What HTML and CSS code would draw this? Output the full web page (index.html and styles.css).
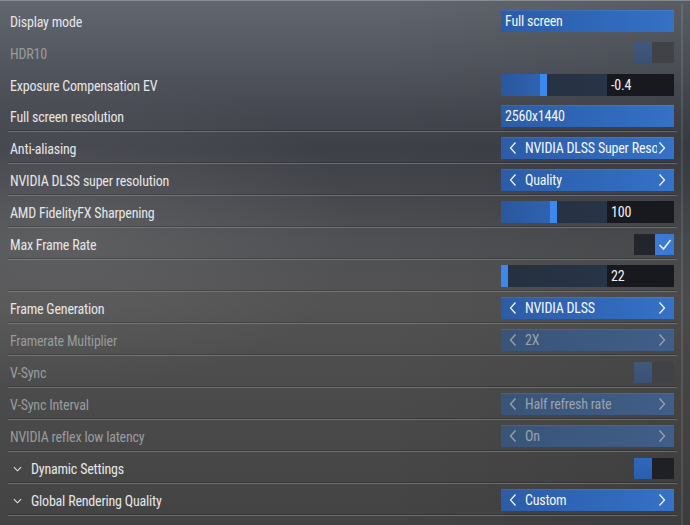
FILE: index.html
```html
<!DOCTYPE html>
<html>
<head>
<meta charset="utf-8">
<link rel="stylesheet" href="styles.css">
</head>
<body>
<div class="page">
  <div class="list">
    <div class="row">
      <span class="label">Display mode</span>
      <div class="ctl drop">Full screen</div>
    </div>
    <div class="row">
      <span class="label dim">HDR10</span>
      <div class="toggle off"><span class="a"></span><span class="b"></span></div>
    </div>
    <div class="row">
      <span class="label">Exposure Compensation EV</span>
      <div class="ctl slider"><div class="track"><span class="fill" style="width:39px"></span><span class="knob"></span></div><span class="val">-0.4</span></div>
    </div>
    <div class="row sep">
      <span class="label">Full screen resolution</span>
      <div class="ctl drop">2560x1440</div>
    </div>
    <div class="row sep">
      <span class="label">Anti-aliasing</span>
      <div class="ctl sel"><svg class="chev" viewBox="0 0 8 14"><polyline points="6.5,1.5 1.5,7 6.5,12.5"/></svg><span class="txt">NVIDIA DLSS Super Resolution</span><svg class="chev" viewBox="0 0 8 14"><polyline points="1.5,1.5 6.5,7 1.5,12.5"/></svg></div>
    </div>
    <div class="row sep">
      <span class="label">NVIDIA DLSS super resolution</span>
      <div class="ctl sel"><svg class="chev" viewBox="0 0 8 14"><polyline points="6.5,1.5 1.5,7 6.5,12.5"/></svg><span class="txt">Quality</span><svg class="chev" viewBox="0 0 8 14"><polyline points="1.5,1.5 6.5,7 1.5,12.5"/></svg></div>
    </div>
    <div class="row sep">
      <span class="label">AMD FidelityFX Sharpening</span>
      <div class="ctl slider"><div class="track"><span class="fill" style="width:49px"></span><span class="knob"></span></div><span class="val">100</span></div>
    </div>
    <div class="row sep">
      <span class="label">Max Frame Rate</span>
      <div class="toggle check"><span class="a"></span><span class="b"><svg viewBox="0 0 18 21"><polyline points="4,11 8,15 15,6"/></svg></span></div>
    </div>
    <div class="row sep">
      <span class="label"></span>
      <div class="ctl slider"><div class="track"><span class="fill" style="width:0px"></span><span class="knob"></span></div><span class="val">22</span></div>
    </div>
    <div class="row sep">
      <span class="label">Frame Generation</span>
      <div class="ctl sel"><svg class="chev" viewBox="0 0 8 14"><polyline points="6.5,1.5 1.5,7 6.5,12.5"/></svg><span class="txt">NVIDIA DLSS</span><svg class="chev" viewBox="0 0 8 14"><polyline points="1.5,1.5 6.5,7 1.5,12.5"/></svg></div>
    </div>
    <div class="row sep">
      <span class="label dim">Framerate Multiplier</span>
      <div class="ctl sel disabled"><svg class="chev" viewBox="0 0 8 14"><polyline points="6.5,1.5 1.5,7 6.5,12.5"/></svg><span class="txt">2X</span><svg class="chev" viewBox="0 0 8 14"><polyline points="1.5,1.5 6.5,7 1.5,12.5"/></svg></div>
    </div>
    <div class="row sep">
      <span class="label dim">V-Sync</span>
      <div class="toggle off"><span class="a"></span><span class="b"></span></div>
    </div>
    <div class="row sep">
      <span class="label dim">V-Sync Interval</span>
      <div class="ctl sel disabled"><svg class="chev" viewBox="0 0 8 14"><polyline points="6.5,1.5 1.5,7 6.5,12.5"/></svg><span class="txt">Half refresh rate</span><svg class="chev" viewBox="0 0 8 14"><polyline points="1.5,1.5 6.5,7 1.5,12.5"/></svg></div>
    </div>
    <div class="row sep">
      <span class="label dim">NVIDIA reflex low latency</span>
      <div class="ctl sel disabled"><svg class="chev" viewBox="0 0 8 14"><polyline points="6.5,1.5 1.5,7 6.5,12.5"/></svg><span class="txt">On</span><svg class="chev" viewBox="0 0 8 14"><polyline points="1.5,1.5 6.5,7 1.5,12.5"/></svg></div>
    </div>
    <div class="row sep">
      <span class="label group"><svg class="down" viewBox="0 0 10 6"><polyline points="1,1 5,5 9,1"/></svg>Dynamic Settings</span>
      <div class="toggle on"><span class="a"></span><span class="b"></span></div>
    </div>
    <div class="row sep">
      <span class="label group"><svg class="down" viewBox="0 0 10 6"><polyline points="1,1 5,5 9,1"/></svg>Global Rendering Quality</span>
      <div class="ctl sel"><svg class="chev" viewBox="0 0 8 14"><polyline points="6.5,1.5 1.5,7 6.5,12.5"/></svg><span class="txt">Custom</span><svg class="chev" viewBox="0 0 8 14"><polyline points="1.5,1.5 6.5,7 1.5,12.5"/></svg></div>
    </div>
  </div>
  <div class="rail"></div>
</div>
</body>
</html>
```
FILE: styles.css
```css
html, body {
  margin: 0;
  padding: 0;
  width: 690px;
  height: 525px;
  overflow: hidden;
}
body {
  font-family: Roboto, "Liberation Sans", sans-serif;
  font-size: 14px;
  font-stretch: 87.5%;
  font-weight: 400;
  letter-spacing: -0.2px;
  color: #e6e6e6;
  background:
    linear-gradient(90deg, rgba(0,0,0,0) 55%, rgba(0,0,0,0.10) 100%),
    radial-gradient(ellipse 300px 160px at 60px 230px, rgba(130,130,130,0.30), rgba(130,130,130,0) 100%),
    linear-gradient(180deg, #62666e 0%, #555961 10%, #474a52 20%, #3e4048 28%, #44464c 36%, #4f5053 46%, #535354 58%, #4c4c4d 72%, #474747 88%, #434344 100%);
}
.page {
  display: flex;
  height: 525px;
  box-sizing: border-box;
  border-top: 1px solid rgba(170,175,180,0.55);
  padding-top: 3px;
}
.list {
  flex: 1;
  margin-left: 8px;
}
.rail {
  width: 2px;
  margin: 0 7px 0 4px;
  background: rgba(255,255,255,0.10);
}
.row {
  height: 32px;
  box-sizing: border-box;
  display: flex;
  align-items: center;
  justify-content: space-between;
  padding: 1px 3px 0 2px;
}
.row.sep {
  border-bottom: 1px solid rgba(140,140,142,0.55);
  box-shadow: inset 0 -1px 0 rgba(0,0,0,0.18);
}
.label {
  display: flex;
  align-items: center;
  white-space: nowrap;
  padding-top: 2px;
}
.label.dim {
  color: #9a9b9d;
}
.label.group .down {
  width: 9px;
  height: 6px;
  margin: 0 9px 0 3px;
  fill: none;
  stroke: #e6e6e6;
  stroke-width: 1.2;
}
.ctl {
  width: 173px;
  height: 22px;
  box-sizing: border-box;
  display: flex;
  align-items: center;
  overflow: hidden;
}
.drop {
  padding-left: 4px;
  color: #f4f6fa;
  background: linear-gradient(90deg, #2b5ca8 0%, #3068ba 60%, #3571c6 100%);
  box-shadow: inset 0 1px 0 rgba(255,255,255,0.08);
}
.sel {
  padding: 0 8px 0 8px;
  color: #f4f6fa;
  background: linear-gradient(90deg, #2c5ca8 0%, #3068ba 60%, #3572c8 100%);
  box-shadow: inset 0 1px 0 rgba(255,255,255,0.08);
}
.sel .chev {
  flex: none;
  width: 8px;
  height: 14px;
  fill: none;
  stroke: #f0f3f8;
  stroke-width: 1.3;
}
.sel .txt {
  flex: 1;
  margin-left: 8px;
  white-space: nowrap;
  overflow: hidden;
  margin-right: 1px;
}
.sel.disabled {
  color: #9ba2ad;
  background: linear-gradient(90deg, #3a5478 0%, #3d5a82 60%, #405e88 100%);
}
.sel.disabled .chev {
  stroke: #9ba2ad;
}
.slider {
  background: #17191f;
}
.track {
  width: 106px;
  height: 22px;
  display: flex;
  background: linear-gradient(90deg, #253040 0%, #283447 100%);
}
.fill {
  height: 22px;
  background: linear-gradient(90deg, #2a579e 0%, #2f62b0 100%);
}
.knob {
  width: 7px;
  height: 22px;
  background: #3c88ec;
}
.val {
  padding-left: 4px;
  color: #f2f2f2;
}
.toggle {
  width: 40px;
  height: 21px;
  display: flex;
}
.toggle .a {
  width: 18px;
}
.toggle .b {
  flex: 1;
}
.toggle.off .a {
  background: linear-gradient(180deg, #41587c 0%, #3b5174 100%);
}
.toggle.off .b {
  background: #404247;
}
.toggle.on .a {
  background: linear-gradient(180deg, #3068bd 0%, #2b5eac 100%);
}
.toggle.on .b {
  background: #1e2026;
}
.toggle.check .a {
  width: 21px;
  background: #22252c;
}
.toggle.check .b {
  background: #3a79d6;
  display: flex;
}
.toggle.check .b svg {
  width: 19px;
  height: 21px;
  fill: none;
  stroke: #eef3fb;
  stroke-width: 1.6;
}
```
